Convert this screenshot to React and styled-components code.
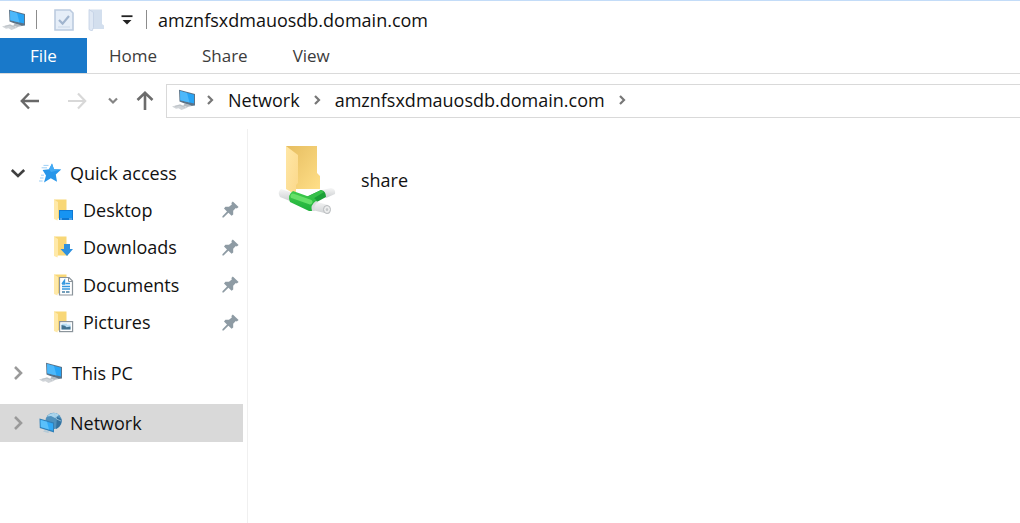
import React from 'react';
import styled, { createGlobalStyle } from 'styled-components';


const GlobalStyle = createGlobalStyle`
    *, *::before, *::after {
        box-sizing: border-box;
    }

    html, body, #root {
        height: 100%;
    }

    body {
        margin: 0;
        background: #fff;
        color: #111;
        font-family: "Open Sans", "Noto Sans", sans-serif;
        font-size: 18px;
        line-height: 24px;
    }

    button {
        padding: 0;
        border: 0;
        background: none;
        color: inherit;
        font: inherit;
        cursor: pointer;
    }

    ul, ol {
        margin: 0;
        padding: 0;
        list-style: none;
    }

    svg {
        display: block;
        flex: none;
    }
`;

const Window = styled.div`
    display: flex;
    flex-direction: column;
    min-height: 100%;
    border-top: 1px solid #c3dcf8;
`;

const TitleBar = styled.header`
    display: flex;
    align-items: center;
    height: 37px;
    padding-left: 2px;
`;

const Divider = styled.span`
    width: 1px;
    height: 19px;
    margin-left: ${props => props.$gap}px;
    background: #8c8c8c;
`;

const QuickButton = styled.button`
    display: flex;
    margin-left: ${props => props.$gap}px;
`;

const WindowTitle = styled.h1`
    margin: 0 0 0 11px;
    font-size: 18px;
    font-weight: 400;
    white-space: nowrap;
`;

const Tabs = styled.nav`
    display: flex;
    height: 36px;
    border-bottom: 1px solid #dadada;
`;

const Tab = styled.button`
    && {
        padding: 0 ${props => props.$file ? 30 : 22}px;
        margin-right: ${props => props.$file ? 0 : 1}px;
        background: ${props => props.$file ? '#1979ca' : 'transparent'};
        color: ${props => props.$file ? '#fff' : '#3c3c3c'};
        font-size: 17px;
    }
`;

const AddressRow = styled.div`
    display: flex;
    align-items: center;
    height: 54px;
    padding-left: 20px;
`;

const NavButton = styled.button`
    display: flex;
    margin-right: ${props => props.$gap}px;
`;

const AddressBar = styled.nav`
    display: flex;
    align-items: center;
    flex: 1;
    height: 34px;
    padding: 0 0 2px 5px;
    border: 1px solid #d9d9d9;
    border-right: 0;
`;

const Crumbs = styled.ol`
    display: flex;
    align-items: center;
    margin-left: 9px;
`;

const Crumb = styled.li`
    display: flex;
    align-items: center;
    gap: 13px;
    margin-left: 14px;
`;

const CrumbLink = styled.a`
    color: inherit;
    text-decoration: none;
`;

const Body = styled.div`
    display: flex;
    flex: 1;
`;

const Sidebar = styled.nav`
    width: 248px;
    margin-top: 1px;
    padding: 25px 4px 0 0;
    border-right: 1px solid #f0f0f0;
`;

const TreeRow = styled.div`
    display: flex;
    align-items: center;
    height: 38px;
    margin-bottom: ${props => props.$spaced ? 12 : 0}px;
    padding-left: 10px;
    background: ${props => props.$selected ? '#d9d9d9' : 'transparent'};
`;

const TreeToggle = styled.button`
    display: flex;
    margin-right: 13px;
`;

const TreeLink = styled.a`
    display: flex;
    align-items: center;
    flex: 1;
    gap: 8px;
    color: inherit;
    text-decoration: none;
`;

const PinnedList = styled.ul`
    display: grid;
    grid-template-rows: repeat(4, 1fr);
    height: 150px;
    margin-bottom: 12px;
`;

const PinnedRow = styled.li`
    display: flex;
    align-items: center;
    padding: 0 4px 2px 53px;
`;

const Content = styled.main`
    flex: 1;
    padding: 17px 30px;
`;

const ShareItem = styled.a`
    display: inline-flex;
    align-items: center;
    gap: 24px;
    color: inherit;
    text-decoration: none;
`;


const ComputerIcon = () => (
    <svg width="25" height="22" viewBox="0 0 25 22" aria-hidden="true">
        <path d="M7 0.8 L23 5 V16.4 L19 17 L7.5 12.4 Z" fill="#5b7388" />
        <path d="M8 2 L22 5.8 V14.6 L8.3 11.2 Z" fill="#27a4f5" />
        <path d="M8 2 L15 4 L17.5 13.4 L8.3 11.2 Z" fill="#4db8fa" />
        <path d="M13 14.6 L17 15.4 L20 17 L15 18 L11 16.6 Z" fill="#b3bac0" />
        <path d="M0 17.4 L8 15.2 L16 18.6 L9.5 21 L6.5 19.2 L4 19.8 Z" fill="#d0d4d8" />
        <path d="M3 17.4 L8 16.2 L13 18.4" fill="none" stroke="#b9bfc4" strokeWidth="0.8" />
    </svg>
);

const PropertiesIcon = () => (
    <svg width="20" height="22" viewBox="0 0 20 22" aria-hidden="true">
        <path d="M1 1 H16 L19 4 V21 H1 Z" fill="#e6eef8" stroke="#bccbdf" strokeWidth="1.6" />
        <path d="M5 11 L8.6 14.6 L15 7" fill="none" stroke="#a0b4ce" strokeWidth="2.2" />
        <path d="M4 18 H16" stroke="#cbd8e8" />
    </svg>
);

const NewFolderIcon = () => (
    <svg width="17" height="22" viewBox="0 0 17 22" aria-hidden="true">
        <path d="M2 0.5 H14 V15 L16 16.5 V20 H4 Z" fill="#d3dfee" />
        <path d="M1 0.5 L5.5 3.5 V18.5 L4 22 L1 20.5 Z" fill="#dfe8f4" stroke="#c3d1e4" strokeWidth="0.8" />
    </svg>
);

const MenuIcon = () => (
    <svg width="12" height="10" viewBox="0 0 12 10" aria-hidden="true">
        <path d="M0.5 1.2 H11.5" stroke="#222" strokeWidth="1.8" />
        <path d="M1.5 5 H10.5 L6 9.6 Z" fill="#222" />
    </svg>
);

const BackIcon = () => (
    <svg width="20" height="18" viewBox="0 0 20 18" aria-hidden="true">
        <path d="M9 1.5 L1.8 9 L9 16.5 M2 9 H19" fill="none" stroke="#686868" strokeWidth="2.4" />
    </svg>
);

const ForwardIcon = () => (
    <svg width="20" height="18" viewBox="0 0 20 18" aria-hidden="true">
        <path d="M11 1.5 L18.2 9 L11 16.5 M18 9 H1" fill="none" stroke="#d8d8d8" strokeWidth="2.2" />
    </svg>
);

const UpIcon = () => (
    <svg width="18" height="20" viewBox="0 0 18 20" aria-hidden="true">
        <path d="M1.5 9 L9 1.8 L16.5 9 M9 2 V19" fill="none" stroke="#6c6c6c" strokeWidth="2.6" />
    </svg>
);

const HistoryIcon = () => (
    <svg width="10" height="8" viewBox="0 0 10 8" aria-hidden="true">
        <path d="M1 1.5 L5 5.5 L9 1.5" fill="none" stroke="#858585" strokeWidth="2.2" />
    </svg>
);

const CrumbArrow = () => (
    <svg width="8" height="10" viewBox="0 0 8 10" aria-hidden="true">
        <path d="M2 1 L6 5 L2 9" fill="none" stroke="#777" strokeWidth="2.2" />
    </svg>
);

const ExpandIcon = ({ open }) => (
    <svg width="16" height="16" viewBox="0 0 16 16" aria-hidden="true">
        {open
            ? <path d="M1.8 5 L8 11 L14.2 5" fill="none" stroke="#404040" strokeWidth="2.6" />
            : <path d="M5 2 L11 8 L5 14" fill="none" stroke="#9a9a9a" strokeWidth="2.6" />}
    </svg>
);

const StarIcon = () => (
    <svg width="23" height="20" viewBox="0 0 23 20" aria-hidden="true">
        <path d="M13 0.5 L15 6.2 L22.2 6.4 L16.8 11.6 L18 18.8 L11.8 15.2 L5 19.4 L7 12.4 L3.6 7 L10 6.2 Z" fill="#2796ea" />
        <path d="M13 0.5 L15 6.2 L22.2 6.4 L12 9 L10 6.2 Z" fill="#43aaf4" />
        <path d="M4.5 2.4 H9.5 M2.6 4.8 H8 M2 12.2 H5 M1 15 H4.5 M0 18 H3.6" stroke="#9dcff6" strokeWidth="1" />
    </svg>
);

const NetworkIcon = () => (
    <svg width="23" height="22" viewBox="0 0 23 22" aria-hidden="true">
        <circle cx="14.6" cy="9" r="8.2" fill="#4f91bd" />
        <path d="M8 4.5 C11 0.5 17 0 20 3 L16 6 L12 4 Z" fill="#a9d4ec" />
        <path d="M18 5 L22.4 7 C23 11 21 15 17 17 Z" fill="#34719e" />
        <path d="M15 1 L17.5 7 L22 9" fill="none" stroke="#9fcbe2" strokeWidth="0.8" />
        <path d="M0.5 6.5 L15 10.5 V20.4 L0.8 16 Z" fill="#3280b8" />
        <path d="M1.6 8 L14 11.6 V18.8 L1.8 15 Z" fill="#31a9f7" />
        <path d="M1.6 8 L8 9.8 L10 17.6 L1.8 15 Z" fill="#5ac0fb" />
        <path d="M6 18 L11 19.8 L9 21 L4 19.6 Z" fill="#b6cad6" />
    </svg>
);

const overlays = {
    Desktop: (
        <>
            <rect x="6" y="11" width="14" height="10" fill="#0e78d2" />
            <rect x="7" y="12" width="12" height="7" fill="#1694f2" />
            <path d="M7 20 H9 M16 20 H19" stroke="#8bcaf8" />
        </>
    ),
    Downloads: <path d="M11 8 H17 V13 H20 L14 20 L7.5 13 H11 Z" fill="#2e91df" />,
    Documents: (
        <>
            <path d="M6.5 3.5 H16 L19.5 7 V21 H6.5 Z" fill="#fff" stroke="#8b949b" strokeWidth="1.2" />
            <path d="M15.5 3.5 V7.5 H19.5" fill="none" stroke="#8b949b" />
            <path d="M9 10 L11.5 6.5 V10 H9 M12.5 9.5 H17 M9 12.5 H17 M9 15 H17" fill="none" stroke="#3699df" strokeWidth="1.4" />
            <path d="M9 18 H12 M13 18 H16.5" stroke="#477fa4" strokeWidth="1.6" />
        </>
    ),
    Pictures: (
        <>
            <rect x="6.6" y="10.6" width="13" height="10" fill="#fff" stroke="#8b949b" strokeWidth="1.2" />
            <rect x="8.5" y="12.5" width="9" height="6" fill="#b9def4" />
            <path d="M8.5 14 L12 14.8 L13.5 16.2 L17.5 15.6 V18.5 H8.5 Z" fill="#42728f" />
            <path d="M14 13 H17" stroke="#fff" />
        </>
    ),
};

const FolderIcon = ({ name }) => (
    <svg width="22" height="22" viewBox="0 0 22 22" aria-hidden="true">
        <path d="M1 0.5 H13.5 V12 L15 13.5 V19.5 H3 Z" fill="#f8d777" />
        <path d="M1 0.5 L5 3 V18 L4.5 21.5 L1 20 Z" fill="#ffe9a8" />
        {overlays[name]}
    </svg>
);

const PinIcon = () => (
    <svg width="17" height="17" viewBox="0 0 17 17" aria-hidden="true">
        <path d="M10.8 0.6 L16.6 6 L14.8 7.4 L13.8 7 L11.2 9.8 L11.2 13.4 L9.6 14.8 L6.4 11.8 L1.6 16.4 L0.4 16.4 L0.4 15.2 L5 10.4 L2 7.4 L3.4 5.8 L7 5.8 L9.8 3.4 L9.4 2 Z" fill="#8e9ba4" />
    </svg>
);

const ShareIcon = () => (
    <svg width="59" height="70" viewBox="0 0 59 70" aria-hidden="true">
        <defs>
            <linearGradient id="folderBack" x1="0" y1="0" x2="1" y2="1">
                <stop offset="0" stopColor="#e6bd60" />
                <stop offset="1" stopColor="#ffdf88" />
            </linearGradient>
            <linearGradient id="folderFront" x1="0" y1="0" x2="1" y2="1">
                <stop offset="0" stopColor="#ffe7a6" />
                <stop offset="1" stopColor="#fbd88a" />
            </linearGradient>
            <linearGradient id="pipe" x1="0" y1="0" x2="0" y2="1">
                <stop offset="0" stopColor="#3fcb4b" />
                <stop offset="1" stopColor="#1fb03c" />
            </linearGradient>
            <linearGradient id="cable" x1="0" y1="0" x2="0" y2="1">
                <stop offset="0" stopColor="#f6f6f6" />
                <stop offset="1" stopColor="#cdd0d2" />
            </linearGradient>
        </defs>
        <path d="M8 1 H39 V28 L42 31 V44 H14 Z" fill="url(#folderBack)" />
        <path d="M8 1 L20 10 V38 L18 40 V50 L8 44 Z" fill="url(#folderFront)" />
        <path d="M3 44 L15 48 L12 56 L2 52 Q-1 47 3 44 Z" fill="url(#cable)" />
        <path d="M44 45 L53 43 Q58 44 57 49 L48 53 Z" fill="url(#cable)" />
        <path d="M36 56 L50 60 Q54 64 51 69 L34 65 Z" fill="url(#cable)" />
        <ellipse cx="49" cy="64.5" rx="3.5" ry="4" fill="#eceded" stroke="#b7babd" />
        <ellipse cx="49" cy="64.5" rx="1.2" ry="1.6" fill="#c5c8ca" />
        <path d="M28 52 L43 45 Q48 46 48 52 L37 58 Z" fill="#1c9f37" />
        <path d="M29 52 L43 45 L46 47 L33 55 Z" fill="#37c04a" />
        <path d="M15 46 L29 51 L36 53 Q39 55 39 57 Q34 60 35 66 L31 66 L12 57 Q9 50 15 46 Z" fill="url(#pipe)" />
        <path d="M15 51 L32 57" fill="none" stroke="#66e069" strokeWidth="5" strokeLinecap="round" />
        <path d="M34 66 Q32 60 38 56 L40 57 Q35 60 37 66 Z" fill="#dadcdd" />
    </svg>
);


const pinned = ['Desktop', 'Downloads', 'Documents', 'Pictures'];

const TreeItem = ({ label, icon, open, spaced, selected }) => (
    <TreeRow $spaced={spaced} $selected={selected}>
        <TreeToggle aria-label={`Toggle ${label}`} aria-expanded={!!open}>
            <ExpandIcon open={open} />
        </TreeToggle>
        <TreeLink href="#" aria-current={selected ? 'page' : undefined}>
            {icon}
            {label}
        </TreeLink>
    </TreeRow>
);


class App extends React.Component {
    render() {
        return (
            <Window>
                <GlobalStyle />

                <TitleBar>
                    <ComputerIcon />
                    <Divider $gap={9} />
                    <QuickButton $gap={17} aria-label="Properties"><PropertiesIcon /></QuickButton>
                    <QuickButton $gap={14} aria-label="New folder"><NewFolderIcon /></QuickButton>
                    <QuickButton $gap={16} aria-label="Customize toolbar"><MenuIcon /></QuickButton>
                    <Divider $gap={13} />
                    <WindowTitle>amznfsxdmauosdb.domain.com</WindowTitle>
                </TitleBar>

                <Tabs aria-label="Ribbon">
                    <Tab $file>File</Tab>
                    <Tab>Home</Tab>
                    <Tab>Share</Tab>
                    <Tab>View</Tab>
                </Tabs>

                <AddressRow>
                    <NavButton $gap={27} aria-label="Back"><BackIcon /></NavButton>
                    <NavButton $gap={21} aria-label="Forward"><ForwardIcon /></NavButton>
                    <NavButton $gap={18} aria-label="Recent locations"><HistoryIcon /></NavButton>
                    <NavButton $gap={12} aria-label="Up"><UpIcon /></NavButton>
                    <AddressBar aria-label="Address">
                        <ComputerIcon />
                        <Crumbs>
                            <li><CrumbArrow /></li>
                            <Crumb>
                                <CrumbLink href="#">Network</CrumbLink>
                                <CrumbArrow />
                            </Crumb>
                            <Crumb>
                                <CrumbLink href="#">amznfsxdmauosdb.domain.com</CrumbLink>
                                <CrumbArrow />
                            </Crumb>
                        </Crumbs>
                    </AddressBar>
                </AddressRow>

                <Body>
                    <Sidebar aria-label="Folders">
                        <TreeItem label="Quick access" icon={<StarIcon />} open />
                        <PinnedList>
                            {pinned.map(name => (
                                <PinnedRow key={name}>
                                    <TreeLink href="#">
                                        <FolderIcon name={name} />
                                        {name}
                                    </TreeLink>
                                    <PinIcon />
                                </PinnedRow>
                            ))}
                        </PinnedList>
                        <TreeItem label="This PC" icon={<ComputerIcon />} spaced />
                        <TreeItem label="Network" icon={<NetworkIcon />} selected />
                    </Sidebar>

                    <Content>
                        <ShareItem href="#">
                            <ShareIcon />
                            share
                        </ShareItem>
                    </Content>
                </Body>
            </Window>
        )
    }
}

export default App
